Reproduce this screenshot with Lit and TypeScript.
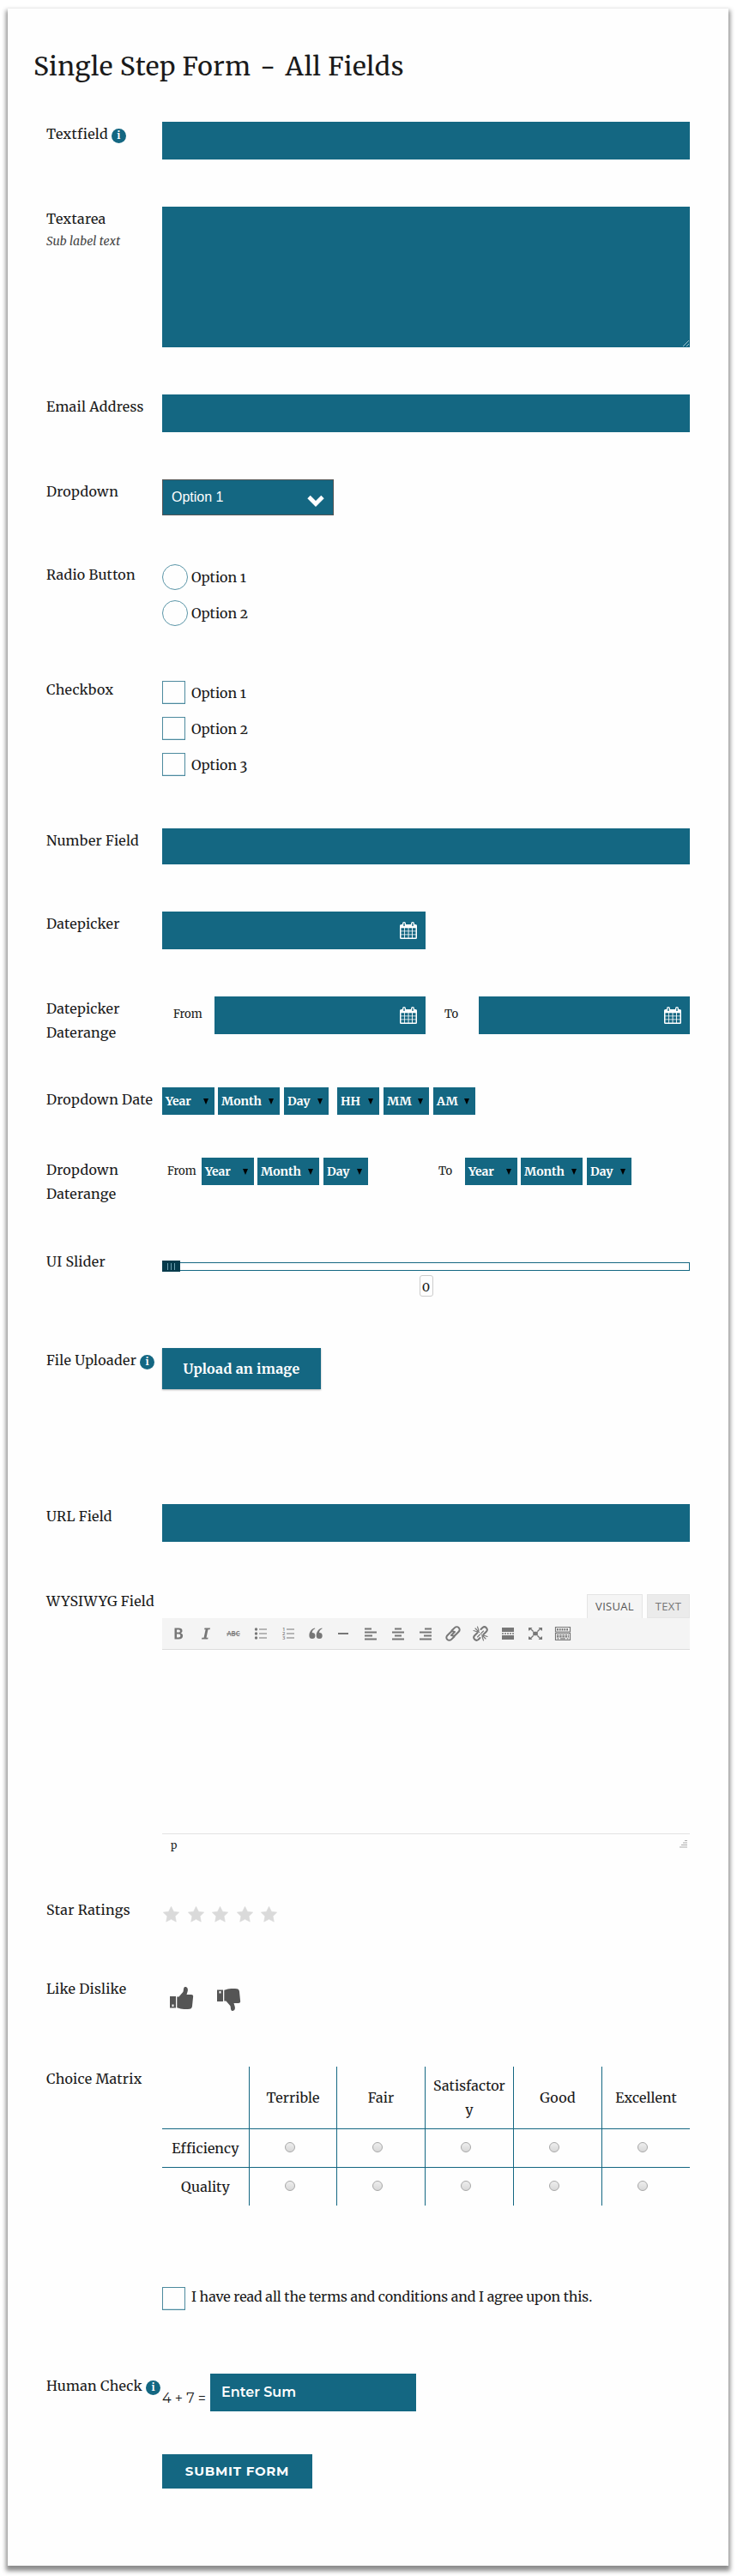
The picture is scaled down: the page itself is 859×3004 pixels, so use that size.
import { LitElement, html, css, svg, nothing, TemplateResult } from "lit";
import { customElement } from "lit/decorators.js";

const TOOLS: TemplateResult[] = [
  svg`<path fill-rule="evenodd" d="M5.500 3.500h4.800c2.700 0 4.200 1.200 4.200 3.200 0 1.300-.7 2.300-1.900 2.700 1.600.4 2.500 1.500 2.500 3.100 0 2.500-1.800 4-4.700 4H5.500zM8 5.500v3.100h2c1.200 0 1.900-.6 1.900-1.600s-.7-1.500-1.900-1.500zM8 10.500v4h2.300c1.300 0 2-.7 2-2s-.8-2-2.100-2z"/>`,
  svg`<path d="M8.500 3.500h6.500l-.4 1.800h-2.100l-2 9.400h2.100l-.4 1.800H5l.4-1.800h2.200l2-9.400H8.100z"/>`,
  svg`<text x="10" y="13.300" text-anchor="middle" font-family="Open Sans, sans-serif" font-weight="600" font-size="8.500" textLength="15" lengthAdjust="spacingAndGlyphs">ABC</text><path d="M2 9.700h16v1H2z"/>`,
  svg`<path d="M8 4.500h9v1H8zm0 5h9v1H8zm0 5h9v1H8z"/><circle cx="4.500" cy="5" r="1.700"/><circle cx="4.500" cy="10" r="1.700"/><circle cx="4.500" cy="15" r="1.700"/>`,
  svg`<path d="M8 4.500h9v1H8zm0 5h9v1H8zm0 5h9v1H8z"/><g font-family="Open Sans, sans-serif" font-weight="600" font-size="6"><text x="3" y="7">1</text><text x="3" y="12.200">2</text><text x="3" y="17.400">3</text></g>`,
  svg`<path d="M9.300 4.300C6.600 5.400 5.700 7.400 5.800 9.100a3.500 3.500 0 1 1-3.400 3.500C2.300 8.600 4.500 4.600 9 3.600zM17.600 4.300c-2.700 1.100-3.600 3.100-3.500 4.800a3.500 3.500 0 1 1-3.400 3.500c-.1-4 2.100-8 6.600-9z"/>`,
  svg`<path d="M4 9h12v2H4z"/>`,
  svg`<path d="M3 3.500h8v2H3zm0 4h14v2H3zm0 4h9v2H3zm0 4h14v2H3z"/>`,
  svg`<path d="M6 3.500h8v2H6zm-3 4h14v2H3zm3 4h8v2H6zm-3 4h14v2H3z"/>`,
  svg`<path d="M9 3.500h8v2H9zm-6 4h14v2H3zm5 4h9v2H8zm-5 4h14v2H3z"/>`,
  svg`<g fill="none" stroke="#777" stroke-width="2" stroke-linecap="round"><path d="M8.500 6.500l3.500-3.400a3.200 3.200 0 0 1 4.700 4.700l-4 4a3.200 3.200 0 0 1-4 .4"/><path d="M11.500 13.500l-3.500 3.400a3.200 3.200 0 0 1-4.700-4.700l4-4a3.200 3.200 0 0 1 4-.4M8 12l4-4"/></g>`,
  svg`<g fill="none" stroke="#777" stroke-width="2" stroke-linecap="round"><path d="M10.500 5l2-2a3.200 3.200 0 0 1 4.500 4.500l-3.500 3.500M9.500 15l-2 2A3.200 3.200 0 0 1 3 12.500L6.500 9"/><path stroke-width="1.100" d="M8.500 8.500L4 4M8 6.500L6.500 2M6.500 8L2 6.500M11.500 11.500L16 16M12 13.500l1.500 4.500M13.500 12l4.500 1.500M10.500 10l3-3M9.500 11l-3 3"/></g>`,
  svg`<path d="M3 3h14v5H3zM3 12h14v5H3zM3 9.300h2v1.400H3zm3 0h2v1.400H6zm3 0h2v1.400H9zm3 0h2v1.400h-2zm3 0h2v1.400h-2z"/>`,
  svg`<path d="M7.200 7.800h5.600v4.400H7.200zM2 3h4.500L5.200 4.300 8 7 7 8 4.300 5.200 3 6.500H2zM18 3h-4.500l1.300 1.300L12 7l1 1 2.700-2.800L17 6.500h1zM2 17h4.500l-1.300-1.300L8 13l-1-1-2.700 2.800L3 13.500H2zM18 17h-4.500l1.300-1.300L12 13l1-1 2.700 2.800 1.300-1.300h1z"/>`,
  svg`<g fill="none" stroke="#777"><path d="M1.500 2.500h17v5.500h-17zM1.500 9.500h17v8h-17z" stroke-width="1.200"/><path d="M3 5.200h14" stroke-width="2.600" stroke-dasharray="1.800 1"/><path d="M3 11.700h14M3 13.700h14" stroke-width="1.500" stroke-dasharray="2.400 .8"/><path d="M3.500 15.800h2M7 15.800h6M14.500 15.800h2" stroke-width="1.300"/></g>`,
];

const calendar = html`<svg class="cal" viewBox="0 0 20 20" width="20" height="20">
  <path fill="#fff" fill-rule="evenodd" d="M1.500 3H3V2a2 2 0 0 1 4 0v1h6V2a2 2 0 0 1 4 0v1h1.500A1.500 1.500 0 0 1 20 4.500v14a1.500 1.500 0 0 1-1.500 1.500h-17A1.500 1.500 0 0 1 0 18.500v-14A1.500 1.500 0 0 1 1.500 3z"/>
  <path fill="#146782" d="M4.300 1.500h1.400v3.500H4.300zM14.300 1.500h1.400v3.500h-1.400zM1.500 7.200h3.700v3.200H1.500zm4.500 0h3.600v3.200H6zm4.500 0h3.600v3.200h-3.600zm4.500 0h3.500v3.200H15zM1.500 11.200h3.700v3.200H1.500zm4.500 0h3.600v3.200H6zm4.500 0h3.600v3.200h-3.600zm4.500 0h3.500v3.200H15zM1.500 15.300h3.700v3.200H1.500zm4.500 0h3.600v3.200H6zm4.500 0h3.600v3.200h-3.600zm4.500 0h3.500v3.200H15z"/>
</svg>`;

const info = html`<span class="info">i</span>`;

const thumb = svg`<path fill="#555" fill-rule="evenodd" d="M0 11h7v13.500H0zM2.500 20.500v2.500h2v-2.500zM8.300 11.500h2.200L15.300 6c.7-1.300.4-3 1-4.700.5-1.400 2-1.600 3.200-.8 1.700 1.200 1.600 3.600 1 5.300L19.500 9h5.500c1.500 0 2.400 1 2.100 2.500L26 22.500c-.2 2-1.200 3-3 3.300-3.500.4-9.500.3-12-.8l-2.700-.8z"/>`;

@customElement("app-root")
export class AppRoot extends LitElement {
  static styles = css`
    * { box-sizing: border-box; }
    :host {
      display: block; height: 3004px; padding: 10px 10px 12px 9px; background: #fff; overflow: hidden;
      font: 400 16px/28px Merriweather, "Noto Serif", "DejaVu Serif", serif; color: #1a1a1a; font-variant-numeric: oldstyle-nums;
    }
    .panel { height: 2982px; padding: 46px 45px 0; background: #fefefe; box-shadow: 0 4px 5px 2px rgba(0,0,0,.45); }
    h1 { margin: 0 0 0 -15px; height: 86px; font-size: 30px; line-height: 42px; font-weight: 400; letter-spacing: .58px; white-space: nowrap; }
    .dash { display: inline-block; transform: scaleX(.68); }
    .row { display: grid; grid-template-columns: 135px 615px; }
    .label { white-space: nowrap; letter-spacing: .28px; }
    .sub { font-size: 14px; font-style: italic; line-height: 24px; letter-spacing: .1px; color: #444; }
    .info {
      display: inline-block; width: 17px; height: 17px; margin-left: 4px; border-radius: 50%; background: #146782;
      color: #fff; font-size: 12px; font-weight: 700; line-height: 16px; letter-spacing: 0; text-align: center; vertical-align: 0;
    }
    .fill { height: 44px; background: #146782; }
    .short { height: 42px; }
    .area { height: 164px; display: flex; align-items: flex-end; justify-content: flex-end; }
    .half { width: 307px; }
    .date { display: flex; align-items: center; justify-content: flex-end; padding: 0 10px 0 0; }
    .cal { display: block; }
    .select {
      display: flex; justify-content: space-between; align-items: center; width: 200px; height: 42px; padding: 0 10px;
      border: 1px solid #555; background: #146782; color: #fff; font-family: "Liberation Sans", Arial, sans-serif; font-variant-numeric: normal;
    }
    .chevron { margin-top: 7px; }
    .options { display: flex; flex-direction: column; gap: 12px; padding-top: 2px; }
    .option { display: flex; align-items: center; height: 30px; white-space: nowrap; }
    .ring { width: 30px; height: 30px; margin-right: 4px; border: 1px solid #5b96a8; border-radius: 50%; }
    .checks { gap: 15px; padding-top: 4px; }
    .checks .option { height: 27px; }
    .box { width: 27px; height: 27px; margin-right: 7px; border: 1px solid #4d8a9e; box-shadow: inset 0 -1px 0 #cfe3ea; }
    .range { display: grid; grid-template-columns: 61px 246px 62px 246px; }
    .small { font-size: 13px; }
    .range .small { padding: 7px 0 0 13px; }
    .range .small:nth-child(3) { padding-left: 22px; }
    .picks { display: flex; }
    .pick {
      display: flex; align-items: center; justify-content: space-between; height: 32px; padding: 0 7px 0 4px; margin-right: 5px;
      background: #146782; color: #fff; font-size: 14px; font-weight: 700;
    }
    .pick::after { content: ""; border: 3.5px solid transparent; border-top: 7px solid #000; border-bottom: 0; }
    .w-year { width: 61px; margin-right: 4px; } .w-month { width: 72px; } .w-day { width: 52px; }
    .w-hh { width: 49px; margin-left: 5px; } .w-mm { width: 53px; } .w-am { width: 49px; }
    .lead { width: 46px; padding: 2px 0 0 6px; font-size: 13px; }
    .lead2 { width: 108px; padding: 2px 0 0 77px; font-size: 13px; }
    .slider { display: flex; flex-direction: column; align-items: center; padding-top: 13px; }
    .track { display: flex; align-items: center; width: 100%; height: 13px; }
    .handle { display: flex; gap: 3px; align-items: center; justify-content: center; width: 21px; height: 13px; background: #053a4b; }
    .handle i { width: 1px; height: 8px; background: #6d9fb0; }
    .line { flex: 1; height: 10px; border: 1px solid #146782; border-left: 0; background: #fff; }
    .value { display: flex; justify-content: center; width: 16px; height: 25px; margin-top: 4px; border: 1px solid #ccc; border-radius: 3px; line-height: 26px; font-size: 15px; }
    .upload { width: 185px; height: 48px; background: #146782; color: #fff; font-weight: 700; font-size: 16px; letter-spacing: .3px; line-height: 48px; text-align: center; white-space: nowrap; box-shadow: 0 1px 2px rgba(0,0,0,.3); }
    .editor { padding-top: 6px; }
    .tabs { display: flex; justify-content: flex-end; gap: 5px; font: 13px/27px "Open Sans", sans-serif; letter-spacing: .3px; color: #777; }
    .tab { width: 50px; height: 28px; border: 1px solid #e5e5e5; background: #ebebeb; text-align: center; }
    .tab.on { width: 65px; background: #f5f5f5; border-bottom: 0; color: #555; }
    .bar { display: flex; height: 37px; padding: 8px 3px; background: #f4f4f4; border-bottom: 1px solid #ddd; }
    .tool { display: block; width: 32px; height: 20px; fill: #777; font-variant-numeric: normal; }
    .canvas { height: 214px; }
    .foot { display: flex; justify-content: space-between; border-top: 1px solid #e2e2e2; padding: 6px 3px 0 10px; font-size: 12px; line-height: 14px; }
    .stars { display: flex; gap: 9.5px; padding: 10px 0 0 1px; }
    .thumbs { display: flex; gap: 27px; padding: 12px 0 0 9px; }
    .matrix { display: grid; grid-template-columns: 102px 102px 103px 103px 103px 102px; grid-template-rows: 73px 45px 44px; letter-spacing: .1px; }
    .cell { display: flex; align-items: center; justify-content: center; padding: 0 5px; text-align: center; word-break: break-all; border-right: 1px solid #146782; border-bottom: 1px solid #146782; }
    .cell:nth-child(6n) { border-right: 0; }
    .cell:nth-child(n+13) { border-bottom: 0; }
    .dot { width: 12px; height: 12px; margin: 0 8px 2px 0; border: 1px solid #a8a8a8; border-radius: 50%; background: linear-gradient(#eee, #d8d8d8); }
    .terms { display: flex; white-space: nowrap; letter-spacing: -.07px; }
    .terms .box { margin-top: 3px; }
    .human { display: flex; }
    .sum { width: 56px; padding-top: 15px; white-space: nowrap; font-family: Montserrat, "Open Sans", sans-serif; font-variant-numeric: normal; }
    .answer { width: 240px; padding-left: 13px; color: #fff; font: 600 16px/43px Montserrat, "Open Sans", sans-serif; }
    .submit { width: 175px; height: 40px; background: #146782; color: #fff; font: 700 15px/39px Montserrat, "Open Sans", sans-serif; letter-spacing: .75px; text-align: center; white-space: nowrap; }
    .h99 { height: 99px; } .h219 { height: 219px; } .h97 { height: 97px; } .h134 { height: 134px; } .h176 { height: 176px; }
    .h106 { height: 106px; } .h82 { height: 82px; } .h107 { height: 107px; } .h115 { height: 115px; } .h182 { height: 182px; }
    .h360 { height: 360px; } .h92 { height: 92px; } .h105 { height: 105px; } .h254 { height: 254px; } .h104 { height: 104px; } .h94 { height: 94px; }
  `;

  private row(size: string, label: unknown, field: unknown) {
    return html`<div class="row ${size}"><div class="label">${label}</div><div>${field}</div></div>`;
  }

  private pick(name: string) {
    const widths: Record<string, string> = { Year: "w-year", Month: "w-month", Day: "w-day", HH: "w-hh", MM: "w-mm", AM: "w-am" };
    return html`<div class="pick ${widths[name]}"><span>${name}</span></div>`;
  }

  render() {
    const ymd = ["Year", "Month", "Day"];
    return html`<div class="panel">
      <h1>Single Step Form <span class="dash">–</span> All Fields</h1>
      ${this.row("h99", html`Textfield${info}`, html`<div class="fill"></div>`)}
      ${this.row("h219", html`Textarea<div class="sub">Sub label text</div>`, html`<div class="fill area"><svg width="9" height="9" viewBox="0 0 9 9"><path d="M1 8L8 1M5 8l3-3" stroke="#9cc0cc" fill="none"/></svg></div>`)}
      ${this.row("h99", "Email Address", html`<div class="fill"></div>`)}
      ${this.row("h97", "Dropdown", html`<div class="select"><span>Option 1</span><svg class="chevron" width="20" height="14" viewBox="0 0 20 14"><path d="M2 2.500L10 10.500 18 2.500" fill="none" stroke="#fff" stroke-width="4.800"/></svg></div>`)}
      ${this.row("h134", "Radio Button", html`<div class="options">${[1, 2].map((n) => html`<div class="option"><span class="ring"></span><span>Option ${n}</span></div>`)}</div>`)}
      ${this.row("h176", "Checkbox", html`<div class="options checks">${[1, 2, 3].map((n) => html`<div class="option"><span class="box"></span><span>Option ${n}</span></div>`)}</div>`)}
      ${this.row("h97", "Number Field", html`<div class="fill short"></div>`)}
      ${this.row("h99", "Datepicker", html`<div class="fill half date">${calendar}</div>`)}
      ${this.row("h106", html`Datepicker<br />Daterange`, html`<div class="range"><span class="small">From</span><div class="fill date">${calendar}</div><span class="small">To</span><div class="fill date">${calendar}</div></div>`)}
      ${this.row("h82", "Dropdown Date", html`<div class="picks">${[...ymd, "HH", "MM", "AM"].map((n) => this.pick(n))}</div>`)}
      ${this.row("h107", html`Dropdown<br />Daterange`, html`<div class="picks"><span class="lead">From</span>${ymd.map((n) => this.pick(n))}<span class="lead2">To</span>${ymd.map((n) => this.pick(n))}</div>`)}
      ${this.row("h115", "UI Slider", html`<div class="slider"><div class="track"><div class="handle"><i></i><i></i><i></i></div><div class="line"></div></div><div class="value">0</div></div>`)}
      ${this.row("h182", html`File Uploader${info}`, html`<div class="upload">Upload an image</div>`)}
      ${this.row("h99", "URL Field", html`<div class="fill"></div>`)}
      ${this.row("h360", "WYSIWYG Field", html`<div class="editor">
        <div class="tabs"><div class="tab on">VISUAL</div><div class="tab">TEXT</div></div>
        <div class="bar">${TOOLS.map((t) => html`<svg class="tool" viewBox="-6 0 32 20">${t}</svg>`)}</div>
        <div class="canvas"></div>
        <div class="foot"><span>p</span><svg width="11" height="11" viewBox="0 0 11 11"><path d="M8 1.500h3M6 4h5M4 6.500h7M2 9h9" stroke="#aaa" stroke-width="1.200"/></svg></div></div>`)}
      ${this.row("h92", "Star Ratings", html`<div class="stars">${[1, 2, 3, 4, 5].map(() => html`<svg width="19" height="19" viewBox="0 0 19 19"><path fill="#dadada" stroke="#dadada" stroke-width=".6" stroke-linejoin="round" d="M9.500 .300l2.900 5.900 6.300.9-4.600 4.500 1.200 6.500-5.800-3-5.800 3 1.200-6.500L.3 7.100l6.300-.9z"/></svg>`)}</div>`)}
      ${this.row("h105", "Like Dislike", html`<div class="thumbs"><svg width="28" height="28" viewBox="0 0 28 28">${thumb}</svg><svg width="28" height="28" viewBox="0 0 28 28"><g transform="translate(0 28) scale(1 -1)">${thumb}</g></svg></div>`)}
      ${this.row("h254", "Choice Matrix", html`<div class="matrix">
        ${["", "Terrible", "Fair", "Satisfactory", "Good", "Excellent"].map((t) => html`<div class="cell">${t}</div>`)}
        ${["Efficiency", "Quality"].map((t) => html`<div class="cell">${t}</div>${[1, 2, 3, 4, 5].map(() => html`<div class="cell"><span class="dot"></span></div>`)}`)}</div>`)}
      ${this.row("h104", nothing, html`<div class="terms"><span class="box"></span>I have read all the terms and conditions and I agree upon this.</div>`)}
      ${this.row("h94", html`Human Check${info}`, html`<div class="human"><span class="sum">4 + 7 =</span><div class="fill answer">Enter Sum</div></div>`)}
      ${this.row("h94", nothing, html`<div class="submit">SUBMIT FORM</div>`)}
    </div>`;
  }
}
